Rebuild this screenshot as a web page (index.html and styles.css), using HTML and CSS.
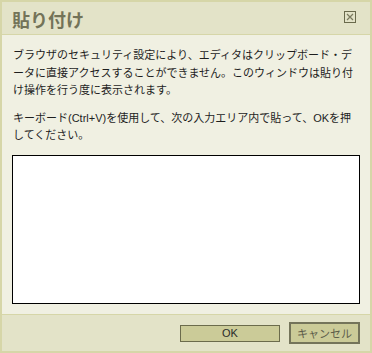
FILE: index.html
```html
<!DOCTYPE html>
<html lang="ja">
<head>
<meta charset="utf-8">
<link rel="stylesheet" href="styles.css">
</head>
<body>
<div class="dialog">
  <div class="titlebar">
    <span class="title">貼り付け</span>
    <svg class="close" width="12" height="12" viewBox="0 0 12 12">
      <rect x="0.5" y="0.5" width="11" height="11" fill="none" stroke="#6a6a4c" stroke-width="1"/>
      <path d="M3 3 L9 9 M9 3 L3 9" stroke="#7a7a5e" stroke-width="1.2"/>
    </svg>
  </div>
  <div class="content">
    <p class="msg">ブラウザのセキュリティ設定により、エディタはクリップボード・データに直接アクセスすることができません。このウィンドウは貼り付け操作を行う度に表示されます。</p>
    <p class="msg msg2">キーボード(Ctrl+V)を使用して、次の入力エリア内で貼って、OKを押してください。</p>
    <div class="pastearea"></div>
  </div>
  <div class="footer">
    <div class="btn ok">OK</div>
    <div class="btn cancel">キャンセル</div>
  </div>
</div>
</body>
</html>
```

FILE: styles.css
```css
html, body {
  margin: 0;
  padding: 0;
  background: #f0f0e2;
}
.dialog {
  box-sizing: border-box;
  width: 372px;
  height: 353px;
  border: 2px solid #d6d6a8;
  display: flex;
  flex-direction: column;
  font-family: "Liberation Sans", "Noto Sans CJK JP", sans-serif;
}
.titlebar {
  height: 32px;
  background: #e3e3c8;
  border-bottom: 1px solid #d6d6a8;
  display: flex;
  align-items: center;
  justify-content: space-between;
  padding: 0 14px 0 10px;
}
.title {
  font-family: "Noto Sans CJK JP", sans-serif;
  font-size: 18px;
  font-weight: bold;
  color: #737358;
  line-height: 18px;
  margin-top: 1px;
}
.close {
  display: block;
  margin-top: -2px;
}
.content {
  flex: 1;
  background: #f0f0e2;
  padding: 12px 10px 0 10px;
  display: flex;
  flex-direction: column;
}
.msg {
  margin: 0 1px;
  font-size: 11px;
  line-height: 17.5px;
  color: #1e1e1e;
}
.msg2 {
  margin-top: 10px;
}
.pastearea {
  margin-top: 10px;
  height: 147px;
  background: #fff;
  border: 1px solid #000;
}
.footer {
  height: 36px;
  background: #e3e3c8;
  border-top: 1px solid #d6d6a8;
  display: flex;
  align-items: center;
  justify-content: flex-end;
  gap: 9px;
  padding: 0 10px 0 0;
}
.btn {
  font-size: 11px;
  border: 1px solid #6b6b4c;
  background: #cbcb98;
  box-sizing: border-box;
  display: flex;
  align-items: center;
  justify-content: center;
}
.ok {
  width: 100px;
  height: 17px;
  color: #2a2a2a;
}
.cancel {
  width: 71px;
  height: 22px;
  color: #5c5c4a;
  border-width: 2px;
  border-color: #74745a;
}
```
